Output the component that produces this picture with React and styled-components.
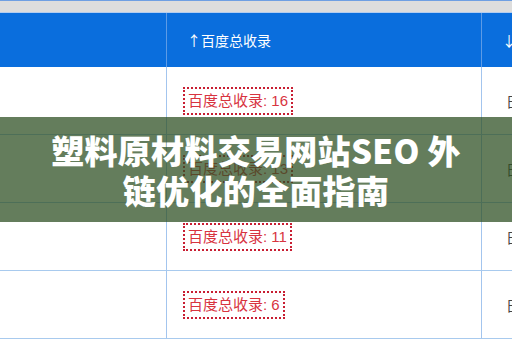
import styled, { createGlobalStyle } from "styled-components";

const GlobalStyle = createGlobalStyle`
  html, body {
    margin: 0;
    padding: 0;
    background: #ffffff;
  }
  body {
    font-family: "Liberation Sans", "Noto Sans CJK SC", sans-serif;
  }
`;

const rows = [16, 13, 11, 6];

export default function App() {
    return (
        <>
            <GlobalStyle />
            <Page>
                <TopBar />
                <Table>
                    <HeadCell />
                    <HeadCell $divider>↑百度总收录</HeadCell>
                    <HeadCell $divider>↓权重</HeadCell>
                    {rows.map((count) => (
                        <Row key={count}>
                            <Cell />
                            <Cell $divider>
                                <Badge>百度总收录: {count}</Badge>
                            </Cell>
                            <Cell $divider $tight>
                                <Muted>日</Muted>
                            </Cell>
                        </Row>
                    ))}
                </Table>
                <Banner>
                    <BannerTitle>
                        塑料原材料交易网站SEO 外
                        <br />
                        链优化的全面指南
                    </BannerTitle>
                </Banner>
            </Page>
        </>
    );
}

const Page = styled.div`
  position: relative;
  width: 512px;
  height: 340px;
  overflow: hidden;
  background: #ffffff;
`;

const TopBar = styled.div`
  height: 11px;
  background: #dddddd;
  border-top: 1px solid #6f9fe2;
  border-bottom: 1px solid #b4cdef;
`;

const Table = styled.div`
  display: grid;
  grid-template-columns: 166px 315px 80px;
`;

const HeadCell = styled.div`
  height: 54px;
  display: flex;
  align-items: center;
  padding-left: 20px;
  background: #0a6edd;
  color: #ffffff;
  font-family: "Noto Sans CJK SC", sans-serif;
  font-size: 14px;
  border-left: ${(p) => (p.$divider ? "1px solid #5d9be6" : "none")};
  white-space: nowrap;
  overflow: hidden;
`;

const Row = styled.div`
  display: contents;
`;

const Cell = styled.div`
  height: 67px;
  display: flex;
  align-items: center;
  padding-left: ${(p) => (p.$tight ? "24px" : "16px")};
  border-left: ${(p) => (p.$divider ? "1px solid #a3c5ee" : "none")};
  border-bottom: 1px solid #a8caee;
  white-space: nowrap;
  overflow: hidden;
`;

const Badge = styled.span`
  display: inline-block;
  padding: 2px 3px;
  border: 2px dotted #c81e32;
  color: #d8343f;
  font-size: 15px;
  line-height: 20px;
`;

const Muted = styled.span`
  color: #444444;
  font-size: 14px;
`;

const Banner = styled.div`
  position: absolute;
  left: 0;
  right: 0;
  top: 117px;
  height: 105px;
  display: flex;
  align-items: center;
  justify-content: center;
  background: rgba(46, 80, 35, 0.74);
`;

const BannerTitle = styled.h1`
  margin: 0;
  color: #ffffff;
  font-family: "Noto Sans CJK SC", sans-serif;
  font-size: 33px;
  line-height: 40px;
  font-weight: 900;
  text-align: center;
  letter-spacing: 0.3px;
`;
